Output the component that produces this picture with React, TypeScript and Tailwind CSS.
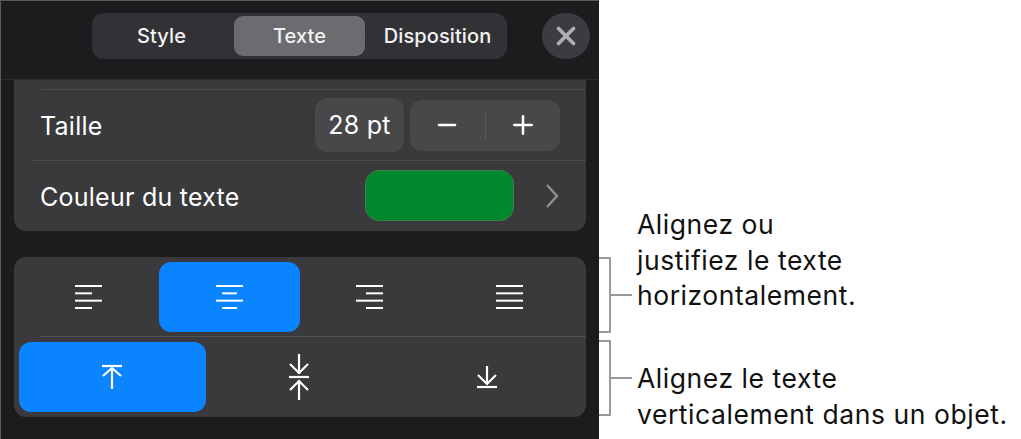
import { Minus, Plus, X } from 'lucide-react';

const font = { fontFamily: 'Inter, "Noto Sans", sans-serif' };

function AlignIcon({ lines }: { lines: [number, number][] }) {
  return (
    <svg width="28" height="24" viewBox="0 0 28 24" fill="none" stroke="white" strokeWidth="2">
      {lines.map(([x1, x2], i) => (
        <line key={i} x1={x1} x2={x2} y1={1 + i * 7.33} y2={1 + i * 7.33} />
      ))}
    </svg>
  );
}

function ArrowTop() {
  return (
    <svg width="22" height="26" viewBox="0 0 22 26" fill="none" stroke="white" strokeWidth="2.2">
      <path d="M1 2h20" />
      <path d="M11 4v21" />
      <path d="M2 12l9-8 9 8" />
    </svg>
  );
}

function ArrowMiddle() {
  return (
    <svg width="22" height="48" viewBox="0 0 22 48" fill="none" stroke="white" strokeWidth="2.2">
      <path d="M11 1v20" />
      <path d="M2 11l9 9 9-9" />
      <path d="M1 24h20" />
      <path d="M11 27v20" />
      <path d="M2 37l9-9 9 9" />
    </svg>
  );
}

function ArrowBottom() {
  return (
    <svg width="22" height="24" viewBox="0 0 22 24" fill="none" stroke="white" strokeWidth="2.2">
      <path d="M1 22h20" />
      <path d="M11 1v18" />
      <path d="M2 10l9 9 9-9" />
    </svg>
  );
}

function Bracket({ children }: { children: React.ReactNode }) {
  return (
    <div className="flex h-[76px] items-center">
      <div className="h-full w-[12px] shrink-0 border-y-2 border-r-2 border-[#999999]" />
      <div className="h-[2px] w-[21px] shrink-0 bg-[#999999]" />
      {children}
    </div>
  );
}

export default function App() {
  return (
    <div className="flex h-[439px] w-[1021px] overflow-hidden bg-white" style={font}>
      <div className="h-full w-[599px] shrink-0 border-t border-l border-[#5a5a5c] bg-[#1c1c1e] text-white">
        <div className="flex h-[79px] items-start border-b border-[#2c2c2e] pt-[12px] pl-[91px]">
          <div className="flex h-[46px] w-[415px] items-center rounded-[12px] bg-[#323236] px-[3px] text-[20px] font-medium tracking-[0.1px] text-[#f2f2f2]">
            <div className="w-[139px] pr-[6px] text-center">Style</div>
            <div className="flex h-[40px] w-[131px] items-center justify-center rounded-[9px] bg-[#6b6b70]">Texte</div>
            <div className="flex-1 pl-[6px] text-center">Disposition</div>
          </div>
          <div className="ml-[35px] flex h-[46px] w-[48px] items-center justify-center rounded-full bg-[#3c3c40] text-[#aeaeb2]">
            <X size={30} strokeWidth={3} />
          </div>
        </div>

        <div className="ml-[13px] w-[572px] rounded-b-[12px] bg-[#3a3a3c] pt-[9px]">
          <div className="ml-[27px] h-px bg-[#4c4c4e]" />
          <div className="flex h-[70px] items-center pr-[26px] pl-[26px] text-[25px] tracking-[0.25px]">
            <span className="flex-1 pt-[3px]">Taille</span>
            <div className="flex h-[54px] w-[89px] items-center justify-center rounded-[12px] bg-[#48484b] pt-[2px]">28 pt</div>
            <div className="ml-[6px] flex h-[51px] w-[150px] items-center rounded-[12px] bg-[#48484b]">
              <div className="flex flex-1 justify-center">
                <Minus size={28} strokeWidth={2} />
              </div>
              <div className="h-[27px] w-px bg-[#5c5c5e]" />
              <div className="flex flex-1 justify-center">
                <Plus size={30} strokeWidth={2} />
              </div>
            </div>
          </div>
          <div className="ml-[18px] h-px bg-[#4c4c4e]" />
          <div className="flex h-[70px] items-center pr-[27px] pl-[26px] text-[25px] tracking-[0.25px]">
            <span className="flex-1 pt-[3px]">Couleur du texte</span>
            <div className="mb-[2px] h-[51px] w-[149px] rounded-[14px] border border-[#3f7f4d] bg-[#00892c]" />
            <svg className="ml-[31px]" width="14" height="26" viewBox="0 0 14 26" fill="none" stroke="#8e8e93" strokeWidth="2.4">
              <path d="M2 2l10 11L2 24" />
            </svg>
          </div>
        </div>

        <div className="mt-[26px] ml-[13px] w-[572px] rounded-[12px] bg-[#3a3a3c]">
          <div className="grid h-[79px] grid-cols-[140px_141px_140px_1fr] pt-[5px] pr-[5px] pb-[4px] pl-[5px]">
            <div className="flex items-center justify-center">
              <AlignIcon lines={[[0, 27], [0, 17], [0, 27], [0, 17]]} />
            </div>
            <div className="flex items-center justify-center rounded-[12px] bg-[#0a84ff]">
              <AlignIcon lines={[[0, 27], [6, 21], [0, 27], [6, 21]]} />
            </div>
            <div className="flex items-center justify-center">
              <AlignIcon lines={[[0, 27], [10, 27], [0, 27], [10, 27]]} />
            </div>
            <div className="flex items-center justify-center pr-[2px]">
              <AlignIcon lines={[[0, 27], [0, 27], [0, 27], [0, 27]]} />
            </div>
          </div>
          <div className="ml-[26px] h-px bg-[#525254]" />
          <div className="grid h-[80px] grid-cols-3 px-[5px] pt-[5px] pb-[5px]">
            <div className="flex items-center justify-center rounded-[12px] bg-[#0a84ff] pr-[2px]">
              <ArrowTop />
            </div>
            <div className="flex items-center justify-center pr-[2px]">
              <ArrowMiddle />
            </div>
            <div className="flex items-center justify-center">
              <ArrowBottom />
            </div>
          </div>
        </div>
      </div>

      <div className="flex flex-1 flex-col pt-[257px] text-[26.5px] leading-[35.5px] tracking-[0.55px] text-[#111111]">
        <Bracket>
          <p className="mt-[-69px] ml-[5px] whitespace-nowrap">
            Alignez ou
            <br />
            justifiez le texte
            <br />
            horizontalement.
          </p>
        </Bracket>
        <div className="mt-[7px]">
          <Bracket>
            <p className="mt-[37px] ml-[5px] whitespace-nowrap">
              Alignez le texte
              <br />
              verticalement dans un objet.
            </p>
          </Bracket>
        </div>
      </div>
    </div>
  );
}
